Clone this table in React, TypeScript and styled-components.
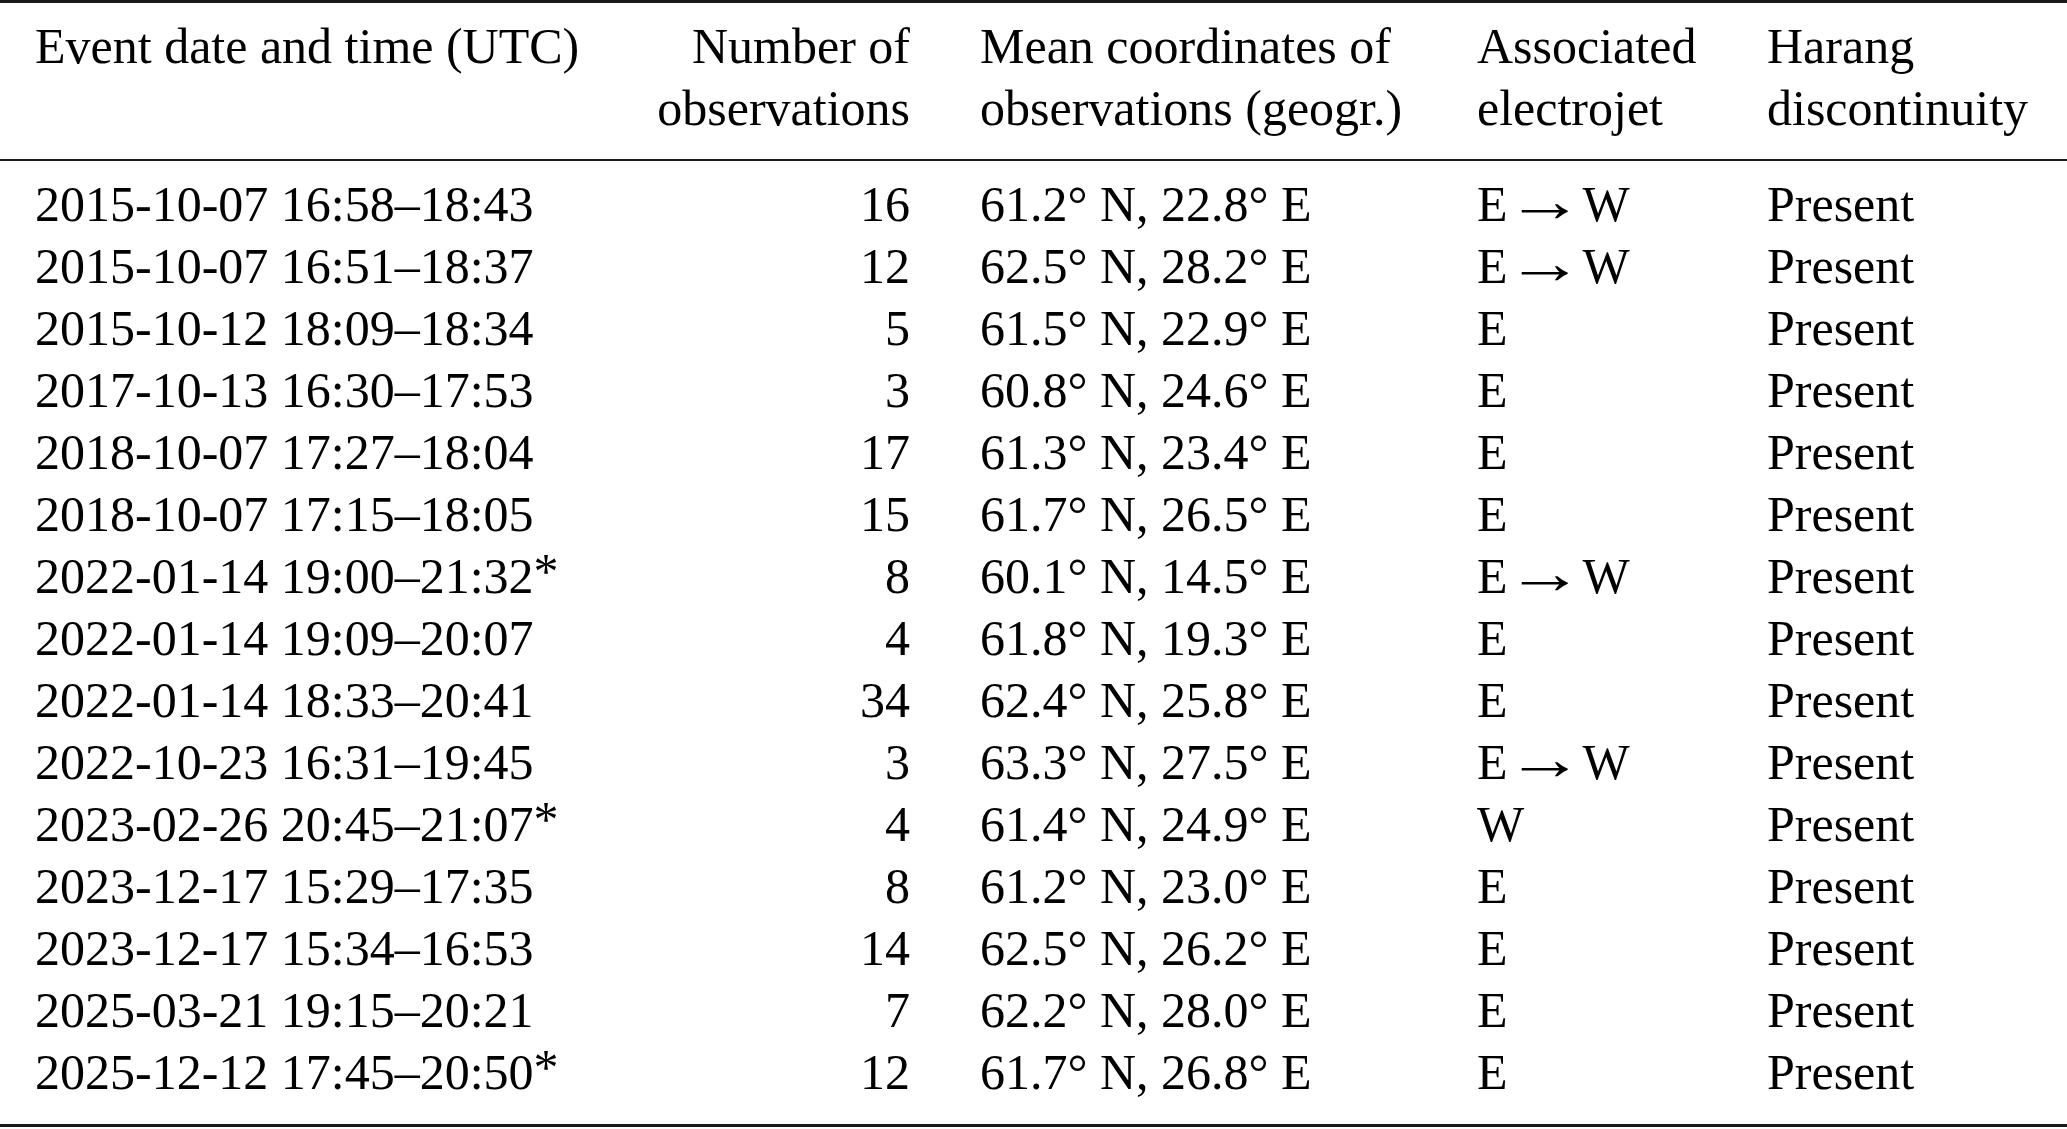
import React from "react";
import styled, { createGlobalStyle } from "styled-components";

const Global = createGlobalStyle`
  html, body { margin: 0; padding: 0; background: #ffffff; }
  body { font-family: "Liberation Serif", "Times New Roman", serif; color: #000; }
`;

const Table = styled.table`
  width: 2067px;
  table-layout: fixed;
  border-collapse: separate;
  border-spacing: 0;
  font-family: "Liberation Serif", "Times New Roman", serif;
  font-size: 50px;
  line-height: 62px;
  color: #000;
`;

const Head = styled.thead``;
const Body = styled.tbody``;

type Align = "left" | "right";

const HeadCell = styled.th<{ $align: Align }>`
  font-weight: normal;
  text-align: ${(p) => p.$align};
  vertical-align: top;
  padding: 11.5px 35px 20.5px;
  border-top: 3px solid #1a1a1a;
  border-bottom: 2px solid #1a1a1a;
  white-space: nowrap;
`;

const Cell = styled.td<{ $align: Align; $first?: boolean; $last?: boolean }>`
  text-align: ${(p) => p.$align};
  height: ${(p) => 62 + (p.$first ? 12 : 0) + (p.$last ? 21 : 0)}px;
  box-sizing: border-box;
  padding: ${(p) => (p.$first ? "12px" : "0")} 35px ${(p) => (p.$last ? "21px" : "0")};
  border-bottom: ${(p) => (p.$last ? "3px solid #1a1a1a" : "none")};
  white-space: nowrap;
  vertical-align: top;
`;

const Star = styled.span`
  line-height: 0;
  vertical-align: 0.1em;
`;

const Arrow = styled.span`
  display: inline-block;
  line-height: 0;
  font-family: "Liberation Serif", serif;
  font-size: 60px;
  transform: scaleX(1.3);
  transform-origin: left center;
  margin: 0 17px 0 -2px;
`;

const widths = [620, 325, 497, 290, 335];

type Row = [string, boolean, number, string, string, boolean];

const rows: Row[] = [
  ["2015-10-07 16:58–18:43", false, 16, "61.2° N, 22.8° E", "E", true],
  ["2015-10-07 16:51–18:37", false, 12, "62.5° N, 28.2° E", "E", true],
  ["2015-10-12 18:09–18:34", false, 5, "61.5° N, 22.9° E", "E", false],
  ["2017-10-13 16:30–17:53", false, 3, "60.8° N, 24.6° E", "E", false],
  ["2018-10-07 17:27–18:04", false, 17, "61.3° N, 23.4° E", "E", false],
  ["2018-10-07 17:15–18:05", false, 15, "61.7° N, 26.5° E", "E", false],
  ["2022-01-14 19:00–21:32", true, 8, "60.1° N, 14.5° E", "E", true],
  ["2022-01-14 19:09–20:07", false, 4, "61.8° N, 19.3° E", "E", false],
  ["2022-01-14 18:33–20:41", false, 34, "62.4° N, 25.8° E", "E", false],
  ["2022-10-23 16:31–19:45", false, 3, "63.3° N, 27.5° E", "E", true],
  ["2023-02-26 20:45–21:07", true, 4, "61.4° N, 24.9° E", "W", false],
  ["2023-12-17 15:29–17:35", false, 8, "61.2° N, 23.0° E", "E", false],
  ["2023-12-17 15:34–16:53", false, 14, "62.5° N, 26.2° E", "E", false],
  ["2025-03-21 19:15–20:21", false, 7, "62.2° N, 28.0° E", "E", false],
  ["2025-12-12 17:45–20:50", true, 12, "61.7° N, 26.8° E", "E", false],
];

export default function App() {
  return (
    <>
      <Global />
      <Table>
        <colgroup>
          {widths.map((w, i) => (
            <col key={i} style={{ width: w }} />
          ))}
        </colgroup>
        <Head>
          <tr>
            <HeadCell $align="left">Event date and time (UTC)</HeadCell>
            <HeadCell $align="right">
              Number of
              <br />
              observations
            </HeadCell>
            <HeadCell $align="left">
              Mean coordinates of
              <br />
              observations (geogr.)
            </HeadCell>
            <HeadCell $align="left">
              Associated
              <br />
              electrojet
            </HeadCell>
            <HeadCell $align="left">
              Harang
              <br />
              discontinuity
            </HeadCell>
          </tr>
        </Head>
        <Body>
          {rows.map((r, i) => {
            const first = i === 0;
            const last = i === rows.length - 1;
            return (
              <tr key={i}>
                <Cell $align="left" $first={first} $last={last}>
                  {r[0]}
                  {r[1] && <Star>*</Star>}
                </Cell>
                <Cell $align="right" $first={first} $last={last}>
                  {r[2]}
                </Cell>
                <Cell $align="left" $first={first} $last={last}>
                  {r[3]}
                </Cell>
                <Cell $align="left" $first={first} $last={last}>
                  {r[5] ? (
                    <>
                      E<Arrow>→</Arrow>W
                    </>
                  ) : (
                    r[4]
                  )}
                </Cell>
                <Cell $align="left" $first={first} $last={last}>
                  Present
                </Cell>
              </tr>
            );
          })}
        </Body>
      </Table>
    </>
  );
}
